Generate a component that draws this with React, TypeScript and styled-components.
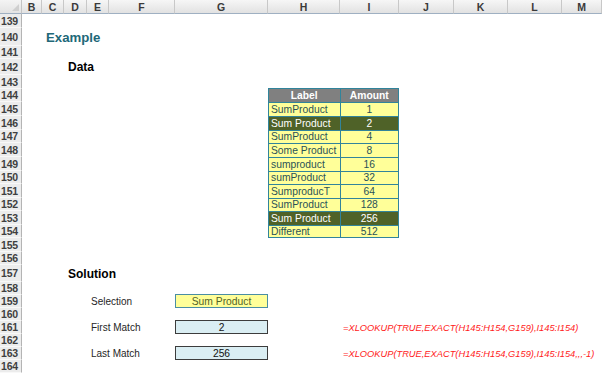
import React from 'react';
import styled, { createGlobalStyle, css } from 'styled-components';

const GlobalStyle = createGlobalStyle`
  html, body {
    margin: 0;
    padding: 0;
    background: #fff;
    overflow: hidden;
  }
  body {
    font-family: 'Liberation Sans', Arial, sans-serif;
  }
`;

const letters = ['B', 'C', 'D', 'E', 'F', 'G', 'H', 'I', 'J', 'K', 'L', 'M'];
const colWidths = [20, 22, 23, 22, 66, 93, 72, 59, 55, 54, 54, 40];
const firstRow = 139;
const rowHeights = [
  14, 18, 13, 16, 14, 13, 14, 14, 13, 14, 14, 13, 14, 13, 14, 13, 14, 13, 17, 13, 13, 13, 13, 13,
  13, 13,
];
const rowNumbers = rowHeights.map((_, i) => firstRow + i);

// grid line helpers: track 1 is the header column / header row
const col = (letter: string) => letters.indexOf(letter) + 2;
const row = (n: number) => n - firstRow + 2;

const data = [
  { label: 'SumProduct', amount: 1 },
  { label: 'Sum Product', amount: 2, hit: true },
  { label: 'SumProduct', amount: 4 },
  { label: 'Some Product', amount: 8 },
  { label: 'sumproduct', amount: 16 },
  { label: 'sumProduct', amount: 32 },
  { label: 'SumproducT', amount: 64 },
  { label: 'SumProduct', amount: 128 },
  { label: 'Sum Product', amount: 256, hit: true },
  { label: 'Different', amount: 512 },
];

type Place = { $col: number; $row: number; $span?: number; $rows?: number };

const placed = css<Place>`
  grid-column: ${(p) => p.$col} / span ${(p) => p.$span ?? 1};
  grid-row: ${(p) => p.$row} / span ${(p) => p.$rows ?? 1};
`;

const Sheet = styled.div`
  display: grid;
  grid-template-columns: 22px ${colWidths.map((w) => `${w}px`).join(' ')};
  grid-template-rows: 14px ${rowHeights.map((h) => `${h}px`).join(' ')};
  width: 602px;
  height: 373px;
  overflow: hidden;
  background: #fff;
`;

const Corner = styled.div`
  grid-column: 1;
  grid-row: 1;
  background: linear-gradient(#f4f4f4, #e3e3e3);
  border-right: 1px solid #c4c4c4;
  border-bottom: 1px solid #9fb0c2;
  box-sizing: border-box;
  position: relative;

  &:after {
    content: '';
    position: absolute;
    right: 2px;
    bottom: 2px;
    border-left: 7px solid transparent;
    border-bottom: 7px solid #cfcfcf;
  }
`;

const ColHead = styled.div<Place>`
  ${placed};
  display: flex;
  align-items: center;
  justify-content: center;
  background: linear-gradient(#f6f6f6, #e2e2e2);
  border-right: 1px solid #c8c8c8;
  border-bottom: 1px solid #9fb0c2;
  box-sizing: border-box;
  font-size: 10.5px;
  font-weight: bold;
  color: #3a3a3a;
  padding-top: 1px;
`;

const RowHead = styled.div<Place>`
  ${placed};
  display: flex;
  align-items: center;
  justify-content: flex-start;
  padding-left: 1px;
  background: #ececec;
  border-right: 1px solid #b4b4b4;
  border-bottom: 1px solid #f8f8f8;
  box-sizing: border-box;
  font-size: 10.5px;
  font-weight: bold;
  color: #3f3f3f;
  letter-spacing: -0.2px;
`;

const TextCell = styled.div<Place & { $size?: number; $bold?: boolean; $color?: string; $italic?: boolean }>`
  ${placed};
  display: flex;
  align-items: center;
  padding-left: ${(p) => (p.$italic ? 3 : 4)}px;
  white-space: nowrap;
  font-size: ${(p) => p.$size ?? 10}px;
  font-weight: ${(p) => (p.$bold ? 'bold' : 'normal')};
  font-style: ${(p) => (p.$italic ? 'italic' : 'normal')};
  color: ${(p) => p.$color ?? '#262626'};
  min-width: 0;
`;

const DataTable = styled.div<Place>`
  ${placed};
  display: grid;
  grid-template-columns: subgrid;
  grid-template-rows: subgrid;
  gap: 1px;
  padding: 1px;
  margin-top: -1px;
  background: #31849b;
`;

type Kind = 'head' | 'plain' | 'hit';

const kindColors: Record<Kind, { bg: string; fg: string }> = {
  head: { bg: '#808080', fg: '#ffffff' },
  plain: { bg: '#ffff99', fg: '#2a5257' },
  hit: { bg: '#4f6228', fg: '#ffffff' },
};

const TableCell = styled.div<{ $kind: Kind; $center?: boolean }>`
  display: flex;
  align-items: center;
  justify-content: ${(p) => (p.$center ? 'center' : 'flex-start')};
  padding-left: ${(p) => (p.$center ? 0 : 2)}px;
  background: ${(p) => kindColors[p.$kind].bg};
  color: ${(p) => kindColors[p.$kind].fg};
  font-size: 10.3px;
  font-weight: ${(p) => (p.$kind === 'head' ? 'bold' : 'normal')};
  white-space: nowrap;
  overflow: hidden;
`;

const ValueBox = styled.div<Place & { $input?: boolean }>`
  ${placed};
  display: flex;
  align-items: center;
  justify-content: center;
  box-sizing: border-box;
  margin-top: -1px;
  background: ${(p) => (p.$input ? '#ffff99' : '#daeef3')};
  border: ${(p) => (p.$input ? '1px solid #4a8ea3' : '1.5px solid #3c3c3c')};
  color: ${(p) => (p.$input ? '#4f6228' : '#111')};
  font-size: 10.3px;
`;

const App: React.FC = () => {
  return (
    <>
      <GlobalStyle />
      <Sheet>
        <Corner />
        {letters.map((l) => (
          <ColHead key={l} $col={col(l)} $row={1}>
            {l}
          </ColHead>
        ))}
        {rowNumbers.map((n) => (
          <RowHead key={n} $col={1} $row={row(n)}>
            {n}
          </RowHead>
        ))}

        <TextCell $col={col('C')} $row={row(140)} $span={4} $size={13.2} $bold $color="#216878">
          Example
        </TextCell>
        <TextCell $col={col('D')} $row={row(142)} $span={3} $size={12} $bold $color="#000">
          Data
        </TextCell>

        <DataTable $col={col('H')} $row={row(144)} $span={2} $rows={11}>
          <TableCell $kind="head" $center>
            Label
          </TableCell>
          <TableCell $kind="head" $center>
            Amount
          </TableCell>
          {data.map((d, i) => (
            <React.Fragment key={i}>
              <TableCell $kind={d.hit ? 'hit' : 'plain'}>{d.label}</TableCell>
              <TableCell $kind={d.hit ? 'hit' : 'plain'} $center>
                {d.amount}
              </TableCell>
            </React.Fragment>
          ))}
        </DataTable>

        <TextCell $col={col('D')} $row={row(157)} $span={3} $size={12} $bold $color="#000">
          Solution
        </TextCell>

        <TextCell $col={col('E')} $row={row(159)} $span={2}>
          Selection
        </TextCell>
        <ValueBox $col={col('G')} $row={row(159)} $input>
          Sum Product
        </ValueBox>

        <TextCell $col={col('E')} $row={row(161)} $span={2}>
          First Match
        </TextCell>
        <ValueBox $col={col('G')} $row={row(161)}>2</ValueBox>
        <TextCell $col={col('I')} $row={row(161)} $span={5} $size={9.3} $italic $color="#ff1a1a">
          =XLOOKUP(TRUE,EXACT(H145:H154,G159),I145:I154)
        </TextCell>

        <TextCell $col={col('E')} $row={row(163)} $span={2}>
          Last Match
        </TextCell>
        <ValueBox $col={col('G')} $row={row(163)}>256</ValueBox>
        <TextCell $col={col('I')} $row={row(163)} $span={5} $size={9.3} $italic $color="#ff1a1a">
          =XLOOKUP(TRUE,EXACT(H145:H154,G159),I145:I154,,,-1)
        </TextCell>
      </Sheet>
    </>
  );
};

export default App;
